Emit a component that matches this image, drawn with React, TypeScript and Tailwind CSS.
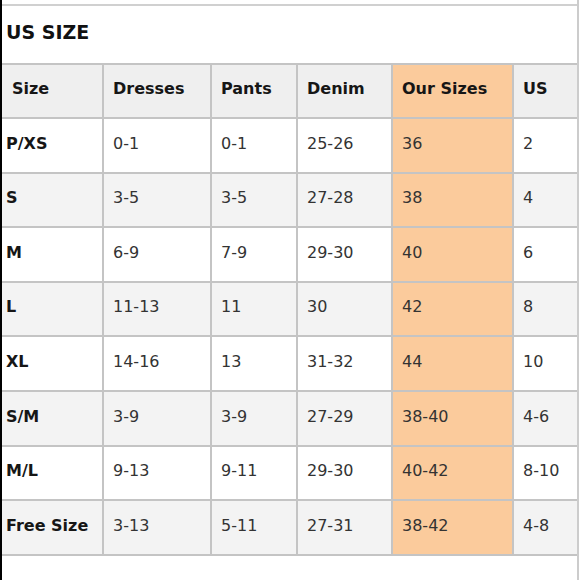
import React from 'react';

// size chart rows: first col is the label, rest are plain values
const header = ['Size', 'Dresses', 'Pants', 'Denim', 'Our Sizes', 'US'];

const rows: string[][] = [
  ['P/XS', '0-1', '0-1', '25-26', '36', '2'],
  ['S', '3-5', '3-5', '27-28', '38', '4'],
  ['M', '6-9', '7-9', '29-30', '40', '6'],
  ['L', '11-13', '11', '30', '42', '8'],
  ['XL', '14-16', '13', '31-32', '44', '10'],
  ['S/M', '3-9', '3-9', '27-29', '38-40', '4-6'],
  ['M/L', '9-13', '9-11', '29-30', '40-42', '8-10'],
  ['Free Size', '3-13', '5-11', '27-31', '38-42', '4-8'],
];

// heights of each row's content, lines are the 2px gaps
const rowHeights = ['h-[52px]', 'h-[53px]', 'h-[52px]', 'h-[53px]', 'h-[52px]', 'h-[53px]', 'h-[53px]', 'h-[52px]', 'h-[53px]'];

const Cell: React.FC<{ text: string; col: number; row: number }> = ({ text, col, row }) => {
  const isHeader = row === 0;
  const orange = col === 4;
  const striped = row % 2 === 0;
  const bg = orange ? 'bg-[#fbcb9c]' : isHeader ? 'bg-[#efefef]' : striped ? 'bg-[#f3f3f3]' : 'bg-white';
  const bold = isHeader || col === 0;
  const pad = col === 0 ? (isHeader ? 'pl-[10px]' : 'pl-[4px]') : 'pl-[9px]';
  return (
    <div
      className={`flex items-center pb-[4px] ${rowHeights[row]} ${bg} ${pad} ${
        bold ? 'font-bold text-[#161616]' : 'text-[#333333]'
      } text-[16px] whitespace-nowrap`}
    >
      {text}
    </div>
  );
};

export default function App() {
  return (
    <div
      className="flex w-[580px] h-[580px] bg-white overflow-hidden"
      style={{ fontFamily: '"DejaVu Sans", Verdana, sans-serif' }}
    >
      <div className="w-[2px] bg-black" />
      <div className="flex flex-col w-[577px] border-r-2 border-[#cccccc] pt-[4px]">
        <div className="h-[2px] bg-[#d0d0d0]" />
        <div className="h-[57px] flex items-center pb-[4px] pl-[4px] text-[19px] font-bold text-[#111111]">
          US SIZE
        </div>
        <div className="grid grid-cols-[100px_106px_84px_93px_119px_63px] gap-[2px] bg-[#c4c4c4] py-[2px]">
          {[header, ...rows].map((r, ri) =>
            r.map((t, ci) => <Cell key={`${ri}-${ci}`} text={t} col={ci} row={ri} />)
          )}
        </div>
      </div>
    </div>
  );
}
